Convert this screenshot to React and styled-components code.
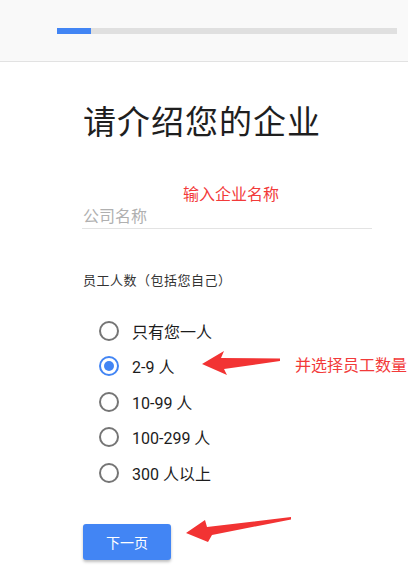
import React, { useState } from "react";
import styled, { createGlobalStyle } from "styled-components";

const Global = createGlobalStyle`
  html, body { margin: 0; padding: 0; background: #fff; }
  body { font-family: Roboto, "Noto Sans CJK SC", sans-serif; }
  * { box-sizing: border-box; }
`;

const Page = styled.div`
  position: relative;
  width: 408px;
  height: 576px;
  overflow: hidden;
  background: #fff;
  display: flex;
  flex-direction: column;
`;

const Header = styled.header`
  height: 62px;
  background: #f9f9f9;
  border-bottom: 1px solid #e2e2e2;
  padding: 28px 11px 0 57px;
`;

const Track = styled.div`
  height: 6px;
  width: 340px;
  background: #e0e0e0;
  display: flex;
`;

const Fill = styled.div`
  height: 100%;
  background: #4285f4;
`;

const Main = styled.main`
  display: flex;
  flex-direction: column;
  align-items: flex-start;
  padding-left: 83px;
`;

const Title = styled.h1`
  margin: 38px 0 0 0;
  font-family: "Noto Sans CJK SC", sans-serif;
  font-size: 33px;
  line-height: 40px;
  font-weight: 400;
  color: #1f1f1f;
  letter-spacing: 1px;
`;

const NameInput = styled.input`
  margin: 62px 0 0 -1px;
  width: 290px;
  height: 27px;
  border: none;
  border-bottom: 1px solid #e3e3e3;
  outline: none;
  padding: 0 0 0 1px;
  font-family: "Noto Sans CJK SC", sans-serif;
  font-size: 16px;
  color: #222;
  background: transparent;
  &::placeholder { color: #b0b0b0; }
`;

const Label = styled.div`
  margin-top: 42px;
  font-family: "Noto Sans CJK SC", sans-serif;
  font-size: 13px;
  line-height: 18px;
  color: #333;
  letter-spacing: 0.5px;
`;

const Options = styled.div`
  margin-top: 24px;
  display: flex;
  flex-direction: column;
`;

const Option = styled.label`
  height: 35.5px;
  display: flex;
  align-items: center;
  gap: 13px;
  padding-left: 16px;
  cursor: pointer;
  font-family: Roboto, "Noto Sans CJK SC", sans-serif;
  font-size: 16px;
  color: #1c1c1c;
`;

const Radio = styled.span`
  width: 20px;
  height: 20px;
  border-radius: 50%;
  border: 2px solid ${(p) => (p.$checked ? "#4285f4" : "#757575")};
  display: flex;
  align-items: center;
  justify-content: center;
  flex-shrink: 0;
  &::after {
    content: "";
    width: 10px;
    height: 10px;
    border-radius: 50%;
    background: #4285f4;
    display: ${(p) => (p.$checked ? "block" : "none")};
  }
`;

const Button = styled.button`
  margin-top: 33px;
  width: 88px;
  height: 36px;
  border: none;
  border-radius: 3px;
  background: #4285f4;
  color: #fff;
  font-family: "Noto Sans CJK SC", sans-serif;
  font-size: 14px;
  box-shadow: 0 2px 3px rgba(0, 0, 0, 0.25);
  cursor: pointer;
`;

const Note = styled.span`
  position: absolute;
  top: ${(p) => p.$top}px;
  left: ${(p) => p.$left}px;
  font-family: "Noto Sans CJK SC", sans-serif;
  font-size: 16px;
  line-height: 20px;
  color: #f23a3a;
  white-space: nowrap;
  pointer-events: none;
`;

const ArrowLayer = styled.svg`
  position: absolute;
  inset: 0;
  pointer-events: none;
`;

const options = ["只有您一人", "2-9 人", "10-99 人", "100-299 人", "300 人以上"];

export default function App() {
  const [sel, setSel] = useState(1);
  return (
    <>
      <Global />
      <Page>
        <Header>
          <Track>
            <Fill style={{ width: "10%" }} />
          </Track>
        </Header>
        <Main>
          <Title>请介绍您的企业</Title>
          <NameInput placeholder="公司名称" />
          <Label>员工人数（包括您自己）</Label>
          <Options>
            {options.map((o, i) => (
              <Option key={o} onClick={() => setSel(i)}>
                <Radio $checked={sel === i} />
                {o}
              </Option>
            ))}
          </Options>
          <Button>下一页</Button>
        </Main>
        <Note $top={183} $left={183}>输入企业名称</Note>
        <Note $top={354} $left={295}>并选择员工数量</Note>
        <ArrowLayer width="408" height="576" viewBox="0 0 408 576">
          <polygon
            fill="#f23333"
            points="202,364 224,351 221,358 280,358.5 280,361 224,369 227,375"
          />
          <polygon
            fill="#f23333"
            points="186,533 205,520 207,527 291,517 291,519.5 212,535 208,542"
          />
        </ArrowLayer>
      </Page>
    </>
  );
}
